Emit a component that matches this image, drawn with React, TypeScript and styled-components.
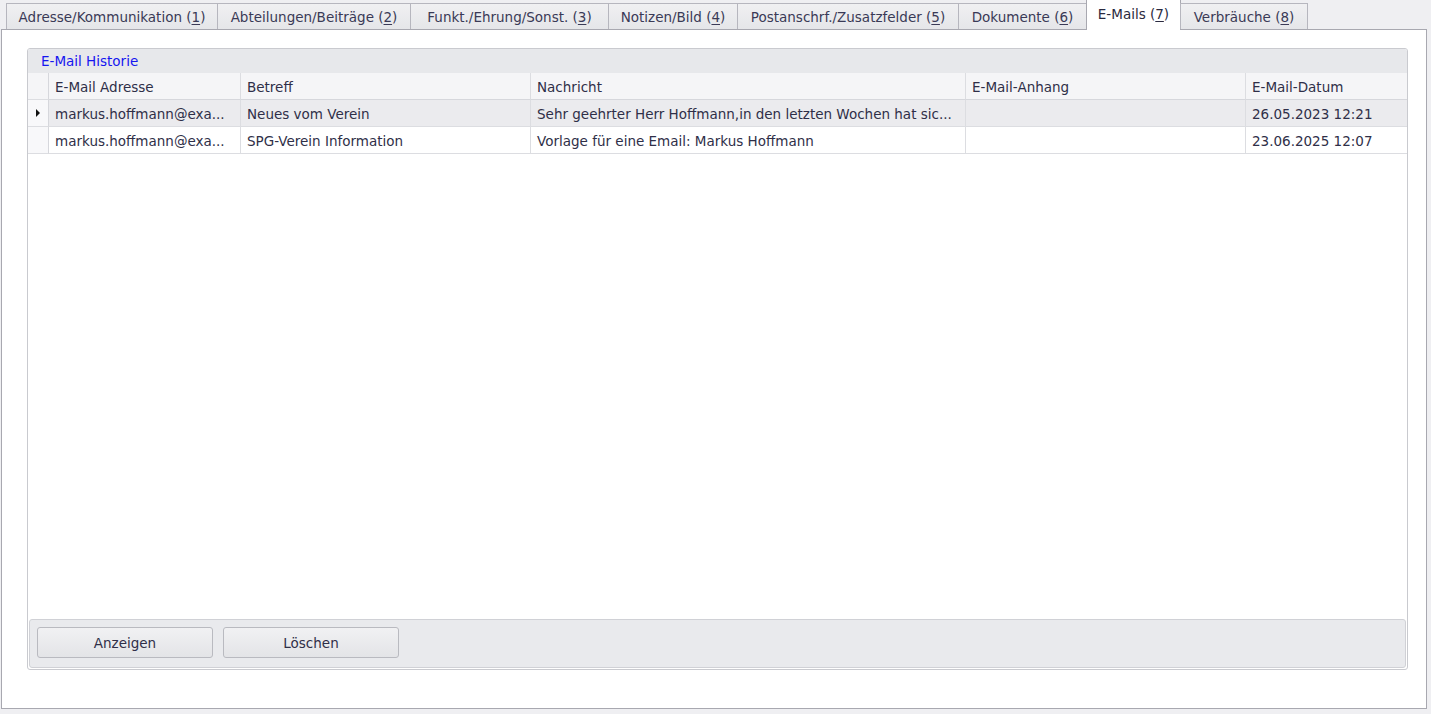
import styled, { createGlobalStyle } from "styled-components";

const GlobalStyle = createGlobalStyle`
  html, body {
    margin: 0;
    padding: 0;
    background: #efeff2;
  }
  body {
    font-family: "DejaVu Sans", "Liberation Sans", sans-serif;
    font-size: 13.5px;
    color: #2f2f48;
  }
`;

const tabs = [
  { label: "Adresse/Kommunikation", key: "1", width: 212 },
  { label: "Abteilungen/Beiträge", key: "2", width: 194 },
  { label: "Funkt./Ehrung/Sonst.", key: "3", width: 199 },
  { label: "Notizen/Bild", key: "4", width: 130 },
  { label: "Postanschrf./Zusatzfelder", key: "5", width: 222 },
  { label: "Dokumente", key: "6", width: 129 },
  { label: "E-Mails", key: "7", width: 95, active: true },
  { label: "Verbräuche", key: "8", width: 128 },
];

const columns = ["E-Mail Adresse", "Betreff", "Nachricht", "E-Mail-Anhang", "E-Mail-Datum"];

const rows = [
  {
    address: "markus.hoffmann@exa...",
    subject: "Neues vom Verein",
    message: "Sehr geehrter Herr Hoffmann,in den letzten Wochen hat sic...",
    attachment: "",
    date: "26.05.2023 12:21",
  },
  {
    address: "markus.hoffmann@exa...",
    subject: "SPG-Verein Information",
    message: "Vorlage für eine Email: Markus Hoffmann",
    attachment: "",
    date: "23.06.2025 12:07",
  },
];

export default function App() {
  return (
    <>
      <GlobalStyle />
      <Page>
        <TabStrip>
          {tabs.map((t) => (
            <Tab key={t.key} $width={t.width} $active={!!t.active}>
              {t.label} (<u>{t.key}</u>)
            </Tab>
          ))}
        </TabStrip>
        <Panel>
          <Group>
            <GroupHeader>E-Mail Historie</GroupHeader>
            <Grid>
              <Row>
                <IndicatorCell $header />
                {columns.map((c) => (
                  <HeaderCell key={c}>{c}</HeaderCell>
                ))}
              </Row>
              {rows.map((r, i) => (
                <Row key={i}>
                  <IndicatorCell $selected={i === 0}>
                    {i === 0 && <Arrow />}
                  </IndicatorCell>
                  <Cell $selected={i === 0}>{r.address}</Cell>
                  <Cell $selected={i === 0}>{r.subject}</Cell>
                  <Cell $selected={i === 0}>{r.message}</Cell>
                  <Cell $selected={i === 0}>{r.attachment}</Cell>
                  <Cell $selected={i === 0}>{r.date}</Cell>
                </Row>
              ))}
            </Grid>
            <ButtonBar>
              <Button type="button">Anzeigen</Button>
              <Button type="button">Löschen</Button>
            </ButtonBar>
          </Group>
        </Panel>
      </Page>
    </>
  );
}

const Page = styled.div`
  height: 714px;
  box-sizing: border-box;
  padding: 0 4px 5px 1px;
  display: flex;
  flex-direction: column;
`;

const TabStrip = styled.div`
  display: flex;
  align-items: flex-end;
  height: 29px;
  padding-left: 6px;
  position: relative;
  z-index: 1;
`;

const Tab = styled.div<{ $width: number; $active: boolean }>`
  box-sizing: border-box;
  width: ${(p) => p.$width}px;
  height: ${(p) => (p.$active ? 31 : 26)}px;
  margin-left: -1px;
  margin-bottom: ${(p) => (p.$active ? -1 : 0)}px;
  border: 1px solid ${(p) => (p.$active ? "#a8a8b0" : "#b6b6be")};
  border-bottom: none;
  background: ${(p) =>
    p.$active ? "#ffffff" : "linear-gradient(#f0f0f2, #e5e6e9)"};
  display: flex;
  align-items: center;
  justify-content: center;
  padding-bottom: ${(p) => (p.$active ? 2 : 0)}px;
  color: ${(p) => (p.$active ? "#2a2a40" : "#3a3a56")};
  white-space: nowrap;

  u {
    text-underline-offset: 2px;
  }
`;

const Panel = styled.div`
  flex: 1;
  background: #ffffff;
  border: 1px solid #a8a8b0;
  padding: 18px 18px 38px 25px;
  display: flex;
  min-height: 0;
`;

const Group = styled.div`
  flex: 1;
  display: flex;
  flex-direction: column;
  border: 1px solid #c9cacf;
  border-radius: 3px;
  overflow: hidden;
`;

const GroupHeader = styled.div`
  height: 24px;
  background: #e7e8eb;
  color: #1616f0;
  padding-left: 13px;
  display: flex;
  align-items: center;
`;

const Grid = styled.div`
  flex: 1;
  background: #ffffff;
  display: flex;
  flex-direction: column;
`;

const Row = styled.div`
  display: grid;
  grid-template-columns: 21px 192px 290px 435px 280px 1fr;
  height: 27px;
`;

const HeaderCell = styled.div`
  background: #f5f5f7;
  border-right: 1px solid #dcdde1;
  border-bottom: 1px solid #d6d7dc;
  padding: 1px 0 0 6px;
  display: flex;
  align-items: center;
  white-space: nowrap;
  overflow: hidden;

  &:last-child {
    border-right: none;
  }
`;

const Cell = styled.div<{ $selected?: boolean }>`
  background: ${(p) => (p.$selected ? "#ebebee" : "#ffffff")};
  border-right: 1px solid #dcdde1;
  border-bottom: 1px solid #dcdde1;
  padding: 1px 0 0 6px;
  display: flex;
  align-items: center;
  white-space: nowrap;
  overflow: hidden;

  &:last-child {
    border-right: none;
  }
`;

const IndicatorCell = styled.div<{ $header?: boolean; $selected?: boolean }>`
  background: ${(p) => (p.$header ? "#f5f5f7" : "#f8f8fa")};
  border-right: 1px solid #d6d7dc;
  border-bottom: 1px solid #dcdde1;
  display: flex;
  align-items: center;
  justify-content: center;
`;

const Arrow = styled.span`
  width: 0;
  height: 0;
  border-top: 4px solid transparent;
  border-bottom: 4px solid transparent;
  border-left: 4px solid #111111;
`;

const ButtonBar = styled.div`
  margin: 0 1px 1px 1px;
  height: 49px;
  box-sizing: border-box;
  background: #e9eaed;
  border: 1px solid #d0d1d6;
  border-radius: 3px;
  display: flex;
  gap: 10px;
  padding: 7px 0 0 7px;
`;

const Button = styled.button`
  width: 176px;
  height: 31px;
  box-sizing: border-box;
  border: 1px solid #b9bac0;
  border-radius: 3px;
  background: linear-gradient(#f1f1f3, #e3e4e7);
  font-family: "DejaVu Sans", "Liberation Sans", sans-serif;
  font-size: 13.5px;
  color: #2f2f48;
  padding: 0;
  cursor: pointer;
`;
